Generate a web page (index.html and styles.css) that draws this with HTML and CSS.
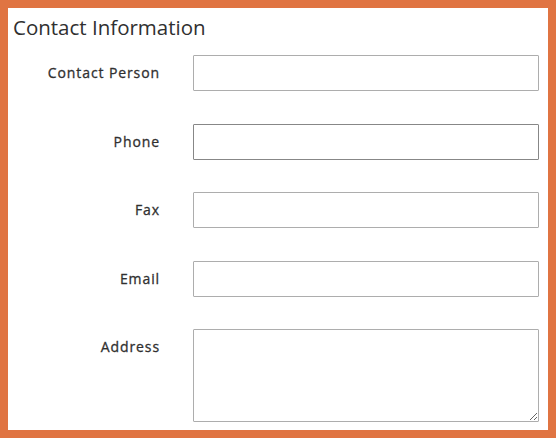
FILE: index.html
```html
<!DOCTYPE html>
<html>
<head>
<meta charset="utf-8">
<link rel="stylesheet" href="styles.css">
</head>
<body>
<div class="frame">
  <h2 class="title">Contact Information</h2>
  <div class="form">
    <label class="label">Contact Person</label>
    <input class="field" type="text">
    <label class="label">Phone</label>
    <input class="field field-hover" type="text">
    <label class="label">Fax</label>
    <input class="field" type="text">
    <label class="label">Email</label>
    <input class="field" type="text">
    <label class="label">Address</label>
    <textarea class="field area"></textarea>
  </div>
</div>
</body>
</html>
```

FILE: styles.css
```css
html, body {
  margin: 0;
  padding: 0;
  background: #fff;
}
.frame {
  box-sizing: border-box;
  width: 556px;
  height: 438px;
  border: 8px solid #e07442;
  background: #fff;
  font-family: "Open Sans", sans-serif;
  color: #303030;
  padding-top: 6px;
}
.title {
  margin: 0 0 14px 5px;
  font-size: 20.5px;
  font-weight: 400;
  line-height: 27px;
  color: #303030;
}
.form {
  display: grid;
  grid-template-columns: 152px 346px;
  column-gap: 33px;
  row-gap: 32.5px;
}
.label {
  text-align: right;
  font-size: 14px;
  font-weight: 400;
  letter-spacing: 0.9px;
  line-height: 20px;
  padding-top: 8px;
  -webkit-text-stroke: 0.3px #303030;
}
.field {
  box-sizing: border-box;
  height: 36px;
  width: 346px;
  border: 1px solid #adadad;
  border-radius: 1px;
  margin: 0;
  padding: 0 10px;
  font-family: "Open Sans", sans-serif;
  background: #fff;
}
.field-hover {
  border-color: #878787;
}
.area {
  height: 93px;
  resize: both;
}
```
